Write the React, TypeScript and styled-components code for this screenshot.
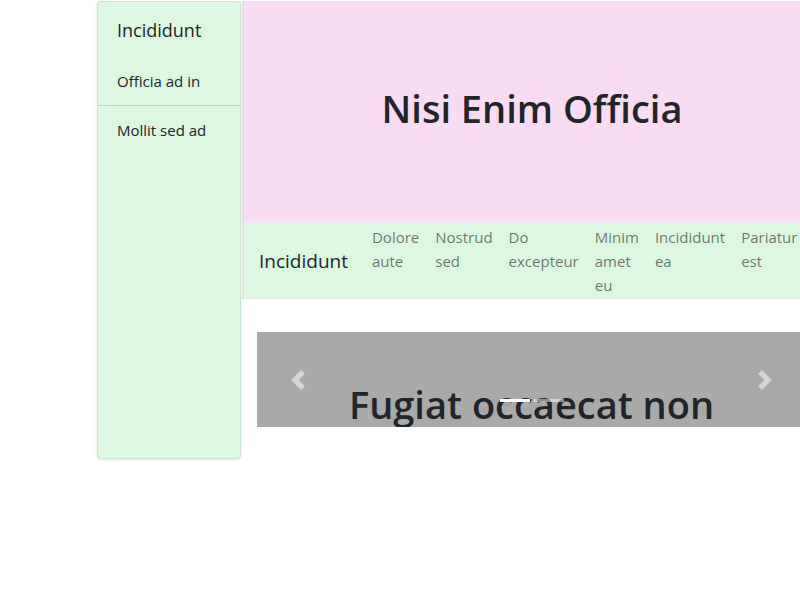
import React from "react";
import styled, { createGlobalStyle } from "styled-components";

const GlobalStyle = createGlobalStyle`
  html, body {
    margin: 0;
    padding: 0;
    overflow: hidden;
    background: #ffffff;
  }
  body {
    font-family: "Open Sans", "Noto Sans", sans-serif;
    color: #212529;
    width: 800px;
    height: 600px;
  }
`;

const NAV_LINKS: string[] = [
  "Dolore aute",
  "Nostrud sed",
  "Do excepteur",
  "Minim amet eu",
  "Incididunt ea",
  "Pariatur est",
];

const SIDE_ITEMS: { label: string; divider?: boolean }[] = [
  { label: "Officia ad in", divider: true },
  { label: "Mollit sed ad" },
];

const App: React.FC = () => {
  return (
    <>
      <GlobalStyle />
      <Page>
        <Sidebar>
          <SidebarTitle>Incididunt</SidebarTitle>
          {SIDE_ITEMS.map((item) => (
            <SidebarItem key={item.label} divider={item.divider}>
              {item.label}
            </SidebarItem>
          ))}
        </Sidebar>

        <Main>
          <Panel>
            <Hero>
              <HeroTitle>Nisi Enim Officia</HeroTitle>
            </Hero>
            <Navbar>
              <Brand>Incididunt</Brand>
              <NavList>
                {NAV_LINKS.map((link) => (
                  <NavLink key={link}>{link}</NavLink>
                ))}
              </NavList>
            </Navbar>
          </Panel>

          <Carousel>
            <CarouselCaption>Fugiat occaecat non</CarouselCaption>
            <Indicators>
              <Indicator active />
              <Indicator />
            </Indicators>
            <Control side="left">
              <Chevron direction="left" />
            </Control>
            <Control side="right">
              <Chevron direction="right" />
            </Control>
          </Carousel>
        </Main>
      </Page>
    </>
  );
};

// bootstrap-style thick chevron
const Chevron: React.FC<{ direction: "left" | "right" }> = ({ direction }) => (
  <svg width="20" height="20" viewBox="0 0 8 8">
    <path
      fill="#ffffff"
      d={
        direction === "left"
          ? "M5.25 0l-4 4 4 4 1.5-1.5L4.25 4l2.5-2.5L5.25 0z"
          : "M2.75 0l-1.5 1.5L3.75 4l-2.5 2.5L2.75 8l4-4-4-4z"
      }
    />
  </svg>
);

const Page = styled.div`
  display: flex;
  align-items: flex-start;
  gap: 1px;
  padding: 1px 0 0 97px;
  width: max-content;
`;

const Sidebar = styled.aside`
  width: 144px;
  height: 458px;
  flex-shrink: 0;
  box-sizing: border-box;
  background: #dcf8e1;
  border: 1px solid rgba(0, 0, 0, 0.08);
  border-radius: 4px;
  box-shadow: 0 1px 3px rgba(0, 0, 0, 0.12);
  display: flex;
  flex-direction: column;
`;

const SidebarTitle = styled.div`
  font-size: 18px;
  line-height: 24px;
  padding: 16px 19px 14px;
`;

const SidebarItem = styled.div<{ divider?: boolean }>`
  font-size: 15px;
  line-height: 22px;
  padding: ${(p) => (p.divider ? "14px 19px 13px" : "13px 19px")};
  border-bottom: ${(p) => (p.divider ? "1px solid rgba(0, 0, 0, 0.13)" : "none")};
`;

const Main = styled.main`
  width: 578px;
  flex-shrink: 0;
  display: flex;
  flex-direction: column;
`;

const Panel = styled.div`
  border-left: 2px solid #e0e0e0;
  background: #ececec;
  display: flex;
  flex-direction: column;
`;

const Hero = styled.section`
  height: 220px;
  background: #f9dbf3;
  display: flex;
  align-items: center;
  justify-content: center;
`;

const HeroTitle = styled.h1`
  margin: 0 0 6px;
  font-size: 38px;
  font-weight: 600;
  color: #212529;
`;

const Navbar = styled.nav`
  margin-top: 2px;
  height: 76px;
  box-sizing: border-box;
  background: #dcf8e1;
  border-bottom: 1px solid #e6e6e6;
  display: flex;
  align-items: center;
  padding: 0 0 0 15px;
`;

const Brand = styled.div`
  font-size: 19px;
  line-height: 28px;
  margin-right: 16px;
  white-space: nowrap;
  flex-shrink: 0;
`;

const NavList = styled.ul`
  list-style: none;
  margin: 0;
  padding: 2px 0 0;
  display: flex;
  align-self: stretch;
`;

const NavLink = styled.li`
  width: min-content;
  flex-shrink: 0;
  font-size: 15px;
  line-height: 24px;
  padding: 0 8px;
  color: rgba(0, 0, 0, 0.55);
`;

const Carousel = styled.div`
  position: relative;
  margin: 33px 14px 0 15px;
  height: 95px;
  background: #a9a9a9;
  overflow: hidden;
  display: flex;
  justify-content: center;
`;

const CarouselCaption = styled.h2`
  margin: 0;
  padding-top: 48px;
  font-size: 38px;
  font-weight: 600;
  line-height: 48px;
  color: #212529;
  white-space: nowrap;
`;

const Indicators = styled.div`
  position: absolute;
  top: 67px;
  left: 0;
  right: 0;
  display: flex;
  justify-content: center;
  gap: 4px;
`;

const Indicator = styled.span<{ active?: boolean }>`
  width: 30px;
  height: 3px;
  background: #ffffff;
  opacity: ${(p) => (p.active ? 1 : 0.5)};
`;

const Control = styled.div<{ side: "left" | "right" }>`
  position: absolute;
  top: 0;
  bottom: 0;
  ${(p) => (p.side === "left" ? "left: 0;" : "right: 0;")}
  width: 15%;
  display: flex;
  align-items: flex-start;
  justify-content: center;
  padding-top: 38px;
  box-sizing: border-box;
  opacity: 0.5;
`;

export default App;
